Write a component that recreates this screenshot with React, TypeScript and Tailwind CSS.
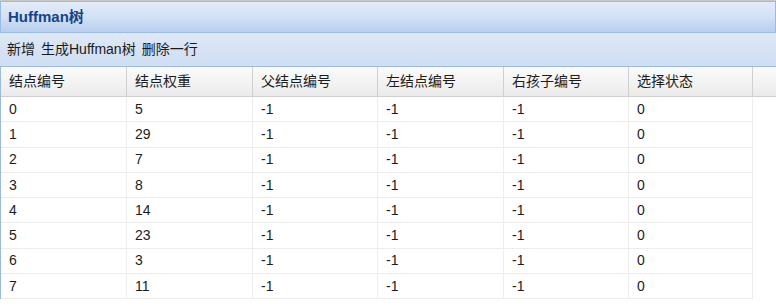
const columns = ["结点编号", "结点权重", "父结点编号", "左结点编号", "右孩子编号", "选择状态"];
const widths = ["w-[126px]", "w-[126px]", "w-[125px]", "w-[126px]", "w-[125px]", "w-[124px]"];

const rows = [
  [0, 5],
  [1, 29],
  [2, 7],
  [3, 8],
  [4, 14],
  [5, 23],
  [6, 3],
  [7, 11],
];

const font = "font-['Liberation_Sans','Noto_Sans_CJK_SC',sans-serif]";

export default function App() {
  return (
    <div className={`h-[307px] w-[776px] overflow-hidden border-t border-[#c8c8c8] bg-white text-[14px] text-[#1c1c1c] ${font}`}>
      <div className="flex h-[32px] items-center border border-[#99bbe8] bg-linear-to-b from-[#e3ecf8] via-[#d2e1f5] to-[#b8cfee] px-[7px]">
        <span className="text-[15px] font-bold text-[#15428b]">Huffman树</span>
      </div>

      <div className="flex h-[34px] items-center gap-[6px] border-b border-[#99bbe8] bg-linear-to-b from-[#dee8f6] to-[#cfdef3] pl-[7px] text-[#1a1a1a]">
        <span>新增</span>
        <span>生成Huffman树</span>
        <span>删除一行</span>
      </div>

      <div className="border-l border-[#99bbe8]">
        <div className="flex h-[30px] border-b border-[#d0d0d0] bg-linear-to-b from-[#fbfbfb] to-[#ebebeb]">
          {columns.map((c, i) => (
            <div key={c} className={`flex ${widths[i]} shrink-0 items-center border-r border-[#d0d0d0] pl-[8px]`}>
              {c}
            </div>
          ))}
          <div className="flex-1" />
        </div>

        {rows.map(([id, w]) => (
          <div key={id} className="flex h-[25.3px]">
            {[id, w, -1, -1, -1, 0].map((v, i) => (
              <div
                key={i}
                className={`flex ${widths[i]} shrink-0 items-center border-r border-b border-[#ededed] pl-[8px]`}
              >
                {v}
              </div>
            ))}
          </div>
        ))}
      </div>
    </div>
  );
}
